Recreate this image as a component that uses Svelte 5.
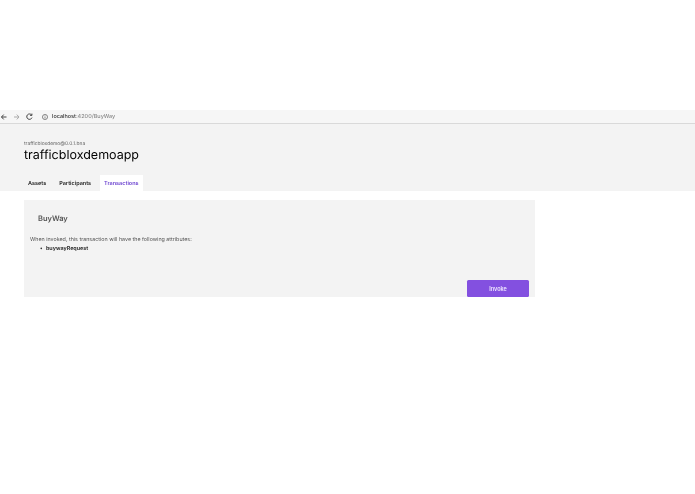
<script>
  let tabs = [
    { label: 'Assets', active: false },
    { label: 'Participants', active: false },
    { label: 'Transactions', active: true }
  ];
</script>

<div class="page">
  <div class="browser-bar">
    <svg class="nav" width="34" height="12" viewBox="0 0 34 12" fill="none" stroke-width="1">
      <path d="M6.5 6H1.5M3.7 3.6 1.5 6l2.2 2.4" stroke="#444" />
      <path d="M14 6h5M16.8 3.6 19 6l-2.2 2.4" stroke="#aaa" />
      <path d="M31.6 4A2.7 2.7 0 1 0 32 6.6M31.9 2.6v1.8h-1.8" stroke="#444" />
    </svg>
    <div class="address">
      <svg width="6" height="6" viewBox="0 0 8 8" fill="none" stroke="#555" stroke-width=".9">
        <circle cx="4" cy="4" r="3.4" />
        <path d="M4 3.4v2.6M4 2v.8" />
      </svg>
      <span class="url"><span class="host">localhost</span>:4200/BuyWay</span>
    </div>
  </div>

  <header class="head">
    <div class="bna">trafficbloxdemo@0.0.1.bna</div>
    <h1>trafficbloxdemoapp</h1>
    <nav class="tabs">
      {#each tabs as tab}
        <div class="tab" class:active={tab.active}>{tab.label}</div>
      {/each}
    </nav>
  </header>

  <section class="card">
    <h2>BuyWay</h2>
    <p>When invoked, this transaction will have the following attributes:</p>
    <ul>
      <li>buywayRequest</li>
    </ul>
    <div class="actions">
      <button>Invoke</button>
    </div>
  </section>
</div>

<style>
  :global(body) {
    background: #fff;
    font-family: Inter, "Liberation Sans", sans-serif;
    text-rendering: geometricPrecision;
  }

  .page {
    padding-top: 110px;
    height: 384px;
    overflow: hidden;
    filter: blur(0.25px);
  }

  .browser-bar {
    height: 13px;
    background: #f6f6f6;
    border-bottom: 1px solid #d9d9d9;
    display: flex;
    align-items: center;
    gap: 8px;
  }

  .address {
    display: flex;
    align-items: center;
    gap: 4px;
    font-size: 5.5px;
    font-weight: 500;
  }

  .url {
    color: #8a8a8a;
  }

  .host {
    color: #333;
  }

  .head {
    background: #f3f3f3;
    height: 67px;
    padding-left: 24px;
    display: flex;
    flex-direction: column;
  }

  .bna {
    margin-top: 17px;
    font-size: 4.9px;
    line-height: 7px;
    color: #666;
  }

  h1 {
    margin: 0;
    font-size: 12.5px;
    line-height: 16px;
    font-weight: 400;
    color: #000;
  }

  .tabs {
    display: flex;
    margin-top: auto;
  }

  .tab {
    height: 16px;
    line-height: 18px;
    padding: 0 4.5px;
    font-size: 5.5px;
    font-weight: 600;
    color: #222;
    margin-right: 4px;
  }

  .tab:first-child {
    padding-left: 4px;
  }

  .tab.active {
    background: #fff;
    color: #6d45d0;
  }

  .card {
    background: #f3f3f3;
    width: 511px;
    height: 97px;
    margin: 9px 0 0 24px;
    box-sizing: border-box;
    position: relative;
    padding: 13px 6px 0;
  }

  h2 {
    margin: 0 0 0 8px;
    font-size: 7.5px;
    line-height: 11px;
    font-weight: 600;
    color: #555;
  }

  p {
    margin: 12px 0 0;
    font-size: 5.35px;
    line-height: 8px;
    color: #555;
  }

  ul {
    margin: 1px 0 0;
    padding-left: 16px;
    list-style: none;
    font-size: 5.35px;
    line-height: 8px;
    font-weight: 700;
    color: #333;
  }

  li::before {
    content: "•";
    display: inline-block;
    width: 6px;
    margin-left: -6px;
  }

  .actions {
    position: absolute;
    right: 6px;
    bottom: 0;
  }

  button {
    display: block;
    width: 62px;
    height: 17px;
    border: none;
    border-radius: 1.5px;
    background: #8350e0;
    color: #f0e8ff;
    font-family: inherit;
    font-size: 5.5px;
    font-weight: 600;
    padding: 0;
  }
</style>
